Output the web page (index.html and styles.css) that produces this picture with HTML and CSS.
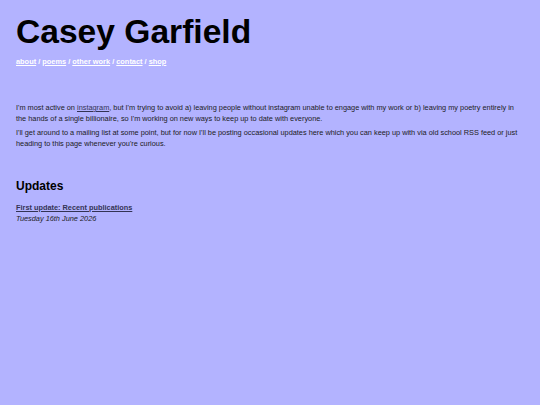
FILE: index.html
```html
<!DOCTYPE html>
<html lang="en">
<head>
<meta charset="utf-8">
<title>Casey Garfield</title>
<link rel="stylesheet" href="styles.css">
</head>
<body>
<header class="site-header">
  <h1 class="site-title">Casey Garfield</h1>
  <nav class="site-nav"><a href="#">about</a> / <a href="#">poems</a> / <a href="#">other work</a> / <a href="#">contact</a> / <a href="#">shop</a></nav>
</header>
<main class="content">
  <section class="intro">
    <p>I'm most active on <a href="#" class="inline-link">instagram</a>, but I'm trying to avoid a) leaving people without instagram unable to engage with my work or b) leaving my poetry entirely in the hands of a single billionaire, so I'm working on new ways to keep up to date with everyone.</p>
    <p>I'll get around to a mailing list at some point, but for now I'll be posting occasional updates here which you can keep up with via old school RSS feed or just heading to this page whenever you're curious.</p>
  </section>
  <section class="updates">
    <h2 class="updates-title">Updates</h2>
    <article class="update">
      <a href="#" class="update-link">First update: Recent publications</a>
      <div class="update-date">Tuesday 16th June 2026</div>
    </article>
  </section>
</main>
</body>
</html>
```
FILE: styles.css
```css
html, body {
  margin: 0;
  padding: 0;
}
body {
  background: #b3b3ff;
  color: #1c1c24;
  font-family: "Liberation Sans", Arial, sans-serif;
  font-size: 7.35px;
  line-height: 11px;
  padding: 12px 16px;
}
.site-title {
  font-size: 33.6px;
  font-weight: bold;
  color: #000;
  margin: 0;
  line-height: 40px;
}
.site-nav {
  margin-top: 4px;
  font-weight: bold;
  font-size: 7.4px;
  color: #fff;
}
.site-nav a {
  color: #fff;
}
.content {
  margin-top: 35px;
}
.intro p {
  margin: 0 0 3px 0;
}
.inline-link {
  color: #333355;
}
.updates {
  margin-top: 32px;
}
.updates-title {
  font-size: 12px;
  margin: 0 0 10px 0;
  color: #000;
}
.update-link {
  color: #333355;
  font-weight: bold;
}
.update-date {
  font-style: italic;
}
```
